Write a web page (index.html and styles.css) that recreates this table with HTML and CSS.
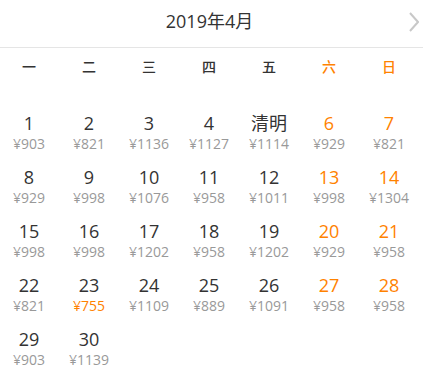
FILE: index.html
```html
<!DOCTYPE html>
<html lang="zh-CN">
<head>
<meta charset="utf-8">
<title>2019年4月</title>
<link rel="stylesheet" href="styles.css">
</head>
<body>
<div class="calendar">
  <header class="cal-header">
    <span class="spacer"></span>
    <h1 class="title">2019年4月</h1>
    <button class="next" aria-label="下个月">
      <svg width="10" height="20" viewBox="0 0 10 20"><path d="M1 1 L9 10 L1 19" fill="none" stroke="#c8c8c8" stroke-width="2"/></svg>
    </button>
  </header>
  <div class="weekdays">
    <span>一</span><span>二</span><span>三</span><span>四</span><span>五</span><span class="we">六</span><span class="we">日</span>
  </div>
  <div class="days">
    <div class="day"><span class="num">1</span><span class="price">¥903</span></div>
    <div class="day"><span class="num">2</span><span class="price">¥821</span></div>
    <div class="day"><span class="num">3</span><span class="price">¥1136</span></div>
    <div class="day"><span class="num">4</span><span class="price">¥1127</span></div>
    <div class="day"><span class="num">清明</span><span class="price">¥1114</span></div>
    <div class="day we"><span class="num">6</span><span class="price">¥929</span></div>
    <div class="day we"><span class="num">7</span><span class="price">¥821</span></div>

    <div class="day"><span class="num">8</span><span class="price">¥929</span></div>
    <div class="day"><span class="num">9</span><span class="price">¥998</span></div>
    <div class="day"><span class="num">10</span><span class="price">¥1076</span></div>
    <div class="day"><span class="num">11</span><span class="price">¥958</span></div>
    <div class="day"><span class="num">12</span><span class="price">¥1011</span></div>
    <div class="day we"><span class="num">13</span><span class="price">¥998</span></div>
    <div class="day we"><span class="num">14</span><span class="price">¥1304</span></div>

    <div class="day"><span class="num">15</span><span class="price">¥998</span></div>
    <div class="day"><span class="num">16</span><span class="price">¥998</span></div>
    <div class="day"><span class="num">17</span><span class="price">¥1202</span></div>
    <div class="day"><span class="num">18</span><span class="price">¥958</span></div>
    <div class="day"><span class="num">19</span><span class="price">¥1202</span></div>
    <div class="day we"><span class="num">20</span><span class="price">¥929</span></div>
    <div class="day we"><span class="num">21</span><span class="price">¥958</span></div>

    <div class="day"><span class="num">22</span><span class="price">¥821</span></div>
    <div class="day"><span class="num">23</span><span class="price low">¥755</span></div>
    <div class="day"><span class="num">24</span><span class="price">¥1109</span></div>
    <div class="day"><span class="num">25</span><span class="price">¥889</span></div>
    <div class="day"><span class="num">26</span><span class="price">¥1091</span></div>
    <div class="day we"><span class="num">27</span><span class="price">¥958</span></div>
    <div class="day we"><span class="num">28</span><span class="price">¥958</span></div>

    <div class="day"><span class="num">29</span><span class="price">¥903</span></div>
    <div class="day"><span class="num">30</span><span class="price">¥1139</span></div>
  </div>
</div>
</body>
</html>
```
FILE: styles.css
```css
html, body {
  margin: 0;
  padding: 0;
  background: #fff;
}
body {
  font-family: "Open Sans", "Noto Sans CJK SC", sans-serif;
  color: #333;
}
.calendar {
  width: 423px;
}
.cal-header {
  display: grid;
  grid-template-columns: 1fr auto 1fr;
  align-items: center;
  height: 47px;
  padding-right: 4px;
  border-bottom: 1px solid #e5e5e5;
}
.title {
  margin: 0 0 5px 0;
  font-size: 18px;
  font-weight: normal;
  line-height: 24px;
  color: #333;
}
.next {
  justify-self: end;
  display: flex;
  padding: 0;
  margin: 0 0 3px 0;
  border: 0;
  background: none;
}
.weekdays {
  display: grid;
  grid-template-columns: repeat(7, 60px);
  margin: 9px 0 0 -1px;
  font-size: 14px;
  font-weight: 500;
  line-height: 20px;
  text-align: center;
  color: #333;
}
.weekdays .we {
  color: #ff8200;
}
.days {
  display: grid;
  grid-template-columns: repeat(7, 60px);
  row-gap: 12px;
  margin: 34px 0 0 -1px;
}
.day {
  display: flex;
  flex-direction: column;
  align-items: center;
}
.num {
  font-size: 18px;
  line-height: 24px;
  color: #333;
}
.price {
  font-size: 14px;
  line-height: 18px;
  color: #999;
}
.day.we .num {
  color: #ff8200;
}
.price.low {
  color: #ff8200;
}
```
